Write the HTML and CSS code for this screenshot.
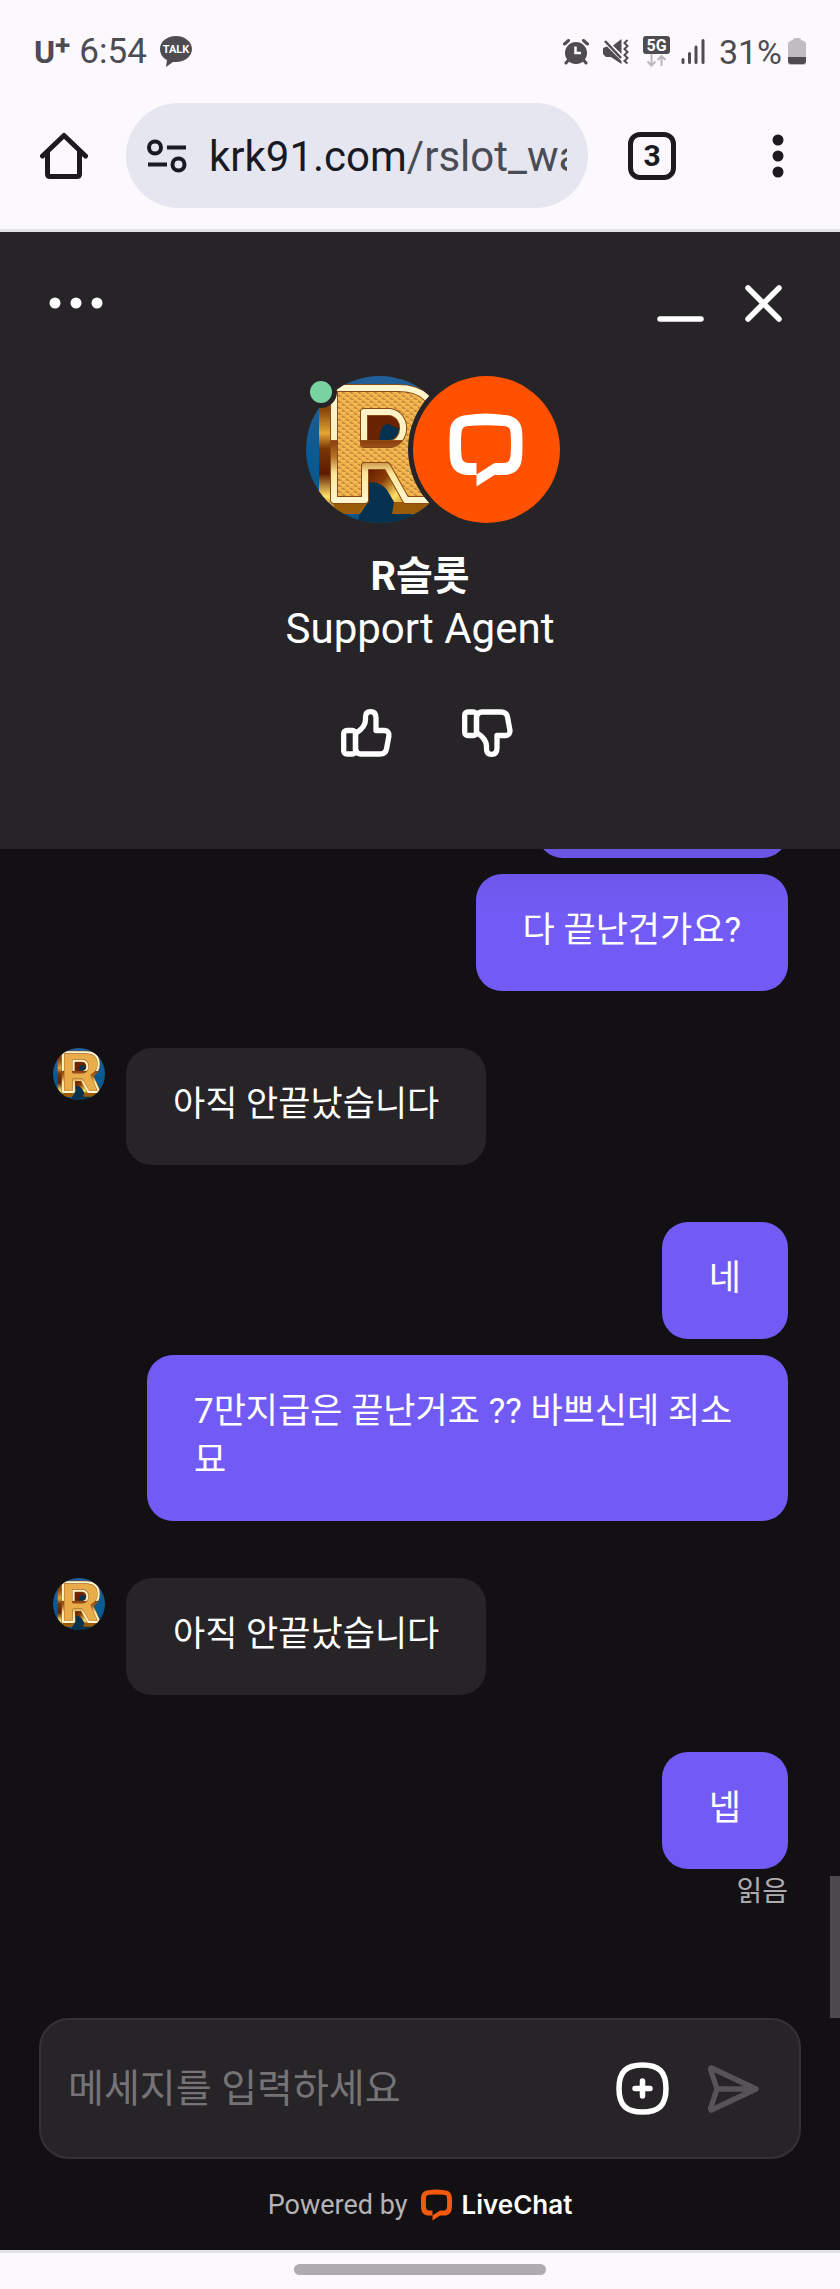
FILE: index.html
```html
<!DOCTYPE html>
<html lang="ko">
<head>
<meta charset="utf-8">
<meta name="viewport" content="width=device-width, initial-scale=1">
<title>LiveChat</title>
<link rel="stylesheet" href="styles.css">
</head>
<body>
<svg class="defs" width="0" height="0" aria-hidden="true">
  <defs>
    <linearGradient id="sky" x1="0" y1="0" x2="0" y2="1">
      <stop offset="0" stop-color="#235e98"/><stop offset=".6" stop-color="#075a94"/><stop offset="1" stop-color="#0c5680"/>
    </linearGradient>
    <linearGradient id="side" x1="0" y1="0" x2="0" y2="1">
      <stop offset="0" stop-color="#6b2a05"/><stop offset=".18" stop-color="#8a4a0c"/><stop offset=".36" stop-color="#e3a437"/>
      <stop offset=".48" stop-color="#7a3604"/><stop offset=".68" stop-color="#5d1c02"/><stop offset=".86" stop-color="#ffe06a"/><stop offset="1" stop-color="#985a06"/>
    </linearGradient>
    <linearGradient id="edge" x1="0" y1="0" x2="0" y2="1">
      <stop offset="0" stop-color="#fff6d0"/><stop offset=".46" stop-color="#fff0bd"/><stop offset=".47" stop-color="#8a3d0b"/>
      <stop offset=".62" stop-color="#b8752a"/><stop offset=".76" stop-color="#ffe79a"/><stop offset="1" stop-color="#fff6cf"/>
    </linearGradient>
    <linearGradient id="legside" x1="0" y1="0" x2="1" y2="1">
      <stop offset="0" stop-color="#5c1600"/><stop offset=".35" stop-color="#8a3d05"/><stop offset=".65" stop-color="#ffdf66"/><stop offset="1" stop-color="#a9650a"/>
    </linearGradient>
    <pattern id="mesh" width="8" height="6" patternUnits="userSpaceOnUse">
      <rect width="8" height="6" fill="#eeaf48"/>
      <path d="M0 1l3 2M4 4l3 2" stroke="#bd8340" stroke-width="1.500"/>
      <path d="M4 1h3M0 4h3" stroke="#ffcb62" stroke-width="1"/>
    </pattern>
    <clipPath id="disc"><circle cx="73.500" cy="73.500" r="73.500"/></clipPath>
    <symbol id="r-badge" viewBox="0 0 147 147">
      <g clip-path="url(#disc)">
        <rect width="147" height="147" fill="url(#sky)"/>
        <path d="M60 36h34v32H60zM60 86h26l22 61H52z" fill="#07324f"/>
        <path d="M26 12L13 30v96l19 12h22l9-14V60z" fill="url(#side)"/>
        <path d="M60 36h16q18 2 20 18l-14-6q-8 0-9 18H60z" fill="#6a2300"/>
        <path d="M60 90h24l20 36-10 10-13-22q-8-10-21-7z" fill="url(#legside)"/>
        <path d="M26 126h36l-10 12H32zM88 126h44l-10 12H86z" fill="#9a5b06"/>
        <path fill-rule="evenodd" d="M28 12H92C117 12 129 25 129 45C129 62 121 72 110 77L131 124H100L81 90H59V124H28ZM58 36V68H84C101 66 102 39 84 36Z" fill="url(#mesh)" stroke="#8a4a14" stroke-width="8" stroke-linejoin="round"/>
        <path fill-rule="evenodd" d="M28 12H92C117 12 129 25 129 45C129 62 121 72 110 77L131 124H100L81 90H59V124H28ZM58 36V68H84C101 66 102 39 84 36Z" fill="none" stroke="url(#edge)" stroke-width="6" stroke-linejoin="round"/>
      </g>
    </symbol>
    <symbol id="livechat" viewBox="0 0 73 74">
      <path fill="currentColor" fill-rule="evenodd" d="M18 2Q36.500 -1 55 2C66 2.500 72 9 72.600 18Q73.400 31 72.600 44C72 55 66 61.500 55 62H45L27 73.500V62H18C7 61.500 1 55 .4 44Q-.4 31 .4 18C1 9 7 2.500 18 2ZM27 50V61.500L45 50H54Q60.500 50 61 43Q62 31 61 19Q60.500 13 54 13Q36.500 11.500 19 13Q12.500 13 12 19Q11 31 12 43Q12.500 50 19 50Z"/>
    </symbol>
    <symbol id="thumb" viewBox="0 0 51 48">
      <g fill="none" stroke="currentColor" stroke-width="5.300" stroke-linejoin="round">
        <rect x="2.700" y="21.500" width="11.800" height="23.500" rx="3"/>
        <path d="M14.500 24.500C20 21 24.500 17 24.500 11V8Q24.500 2.700 29.500 2.700Q35 2.700 35 9V21.500H43.500Q48.500 22 47.900 27L45.500 40Q44.500 45 39 45H20Q15.500 45 14.500 40Z"/>
      </g>
    </symbol>
  </defs>
</svg>

<div class="phone">
  <div class="status">
    <div class="status-side">
      <span class="carrier">U<sup>+</sup></span>
      <span class="clock">6:54</span>
      <svg class="talk" width="32" height="31" viewBox="0 0 32 31" role="img" aria-label="TALK">
        <path fill="#4e4c50" d="M16 0C7 0 0 5.500 0 13c0 5 3 9 7 11L6 31l7-5h3c9 0 16-6 16-13S25 0 16 0Z"/>
        <text x="16" y="17" text-anchor="middle" class="talk-text">TALK</text>
      </svg>
    </div>
    <div class="status-side">
      <svg class="alarm" width="26" height="26" viewBox="0 0 26 26" aria-hidden="true">
        <circle cx="13" cy="14" r="11" fill="#4e4c50"/>
        <path d="M1.500 5L5.500 1.500M20.500 1.500L24.500 5M5.500 21L3 24M20.500 21L23 24" stroke="#4e4c50" stroke-width="3" stroke-linecap="round"/>
        <path d="M12.500 7.500V14H18" fill="none" stroke="#fff" stroke-width="2.500"/>
      </svg>
      <svg class="mute" width="26" height="26" viewBox="0 0 26 26" aria-hidden="true">
        <path fill="#4e4c50" d="M0 9l4-1.500L18.500 22v3L8 18H3l-3-3ZM10 6.500L18.500 0v15Z"/>
        <path d="M2 2L18 19" stroke="#4e4c50" stroke-width="2.500"/>
        <path d="M24.500 1l-3 3 3 3-3 3 3 3-3 3 3 3-3 3 3 2.500" fill="none" stroke="#4e4c50" stroke-width="2"/>
      </svg>
      <svg class="fiveg" width="27" height="31" viewBox="0 0 27 31" role="img" aria-label="5G">
        <rect width="27" height="18" rx="3" fill="#4e4c50"/>
        <text x="13.500" y="15" text-anchor="middle" class="fiveg-text">5G</text>
        <path d="M8.500 18V30M4.500 25.500l4 4 4-4M18.500 30V20M14.500 24l4-4 4 4" fill="none" stroke="#bbb9bd" stroke-width="2"/>
      </svg>
      <svg class="signal" width="24" height="25" viewBox="0 0 24 25" aria-hidden="true">
        <path d="M2 20.500V23.500M8.500 14.500V23.500M15 8V23.500M22 1.500V23.500" stroke="#4e4c50" stroke-width="3" stroke-linecap="round"/>
      </svg>
      <span class="percent">31%</span>
      <svg width="18" height="27" viewBox="0 0 18 27" aria-hidden="true">
        <path fill="#bfbdc1" d="M5 2q0-2 2-2h4q2 0 2 2 5 1 5 4v18q0 3-3 3H3q-3 0-3-3V6Q0 3 5 2Z"/>
        <path fill="#4e4c50" d="M0 19h18v4q0 3-3 3H3q-3 0-3-3Z"/>
      </svg>
    </div>
  </div>

  <nav class="toolbar" aria-label="브라우저">
    <button class="icon-button" aria-label="홈">
      <svg width="48" height="48" viewBox="0 0 48 48"><path d="M2.500 24L24 3.500L45.500 24M7.500 20V42Q7.500 44.500 10 44.500H37Q39.500 44.500 39.500 42V20" fill="none" stroke="#1c1a20" stroke-width="5" stroke-linecap="round" stroke-linejoin="round"/></svg>
    </button>
    <button class="address">
      <svg width="40" height="34" viewBox="0 0 40 34" aria-hidden="true"><g fill="none" stroke="#181a24" stroke-width="4"><circle cx="8" cy="8.500" r="6"/><circle cx="31.500" cy="25.500" r="6"/><path d="M20 8.500H39M1 25.500H20"/></g></svg>
      <span class="url">krk91.com<span class="url-path">/rslot_wa</span></span>
    </button>
    <button class="tabs" aria-label="탭 3개">3</button>
    <button class="icon-button kebab" aria-label="메뉴">
      <svg width="12" height="44" viewBox="0 0 12 44" fill="#1c1a20"><circle cx="6" cy="6" r="5.500"/><circle cx="6" cy="22" r="5.500"/><circle cx="6" cy="38" r="5.500"/></svg>
    </button>
  </nav>

  <header class="head">
    <div class="head-bar">
      <button class="icon-button" aria-label="옵션">
        <svg width="54" height="12" viewBox="0 0 54 12" fill="#fff"><circle cx="6" cy="6" r="5.500"/><circle cx="27" cy="6" r="5.500"/><circle cx="48" cy="6" r="5.500"/></svg>
      </button>
      <div class="head-actions">
        <button class="icon-button" aria-label="최소화">
          <svg width="47" height="37" viewBox="0 0 47 37"><path d="M3 34H44" stroke="#fff" stroke-width="5.500" stroke-linecap="round"/></svg>
        </button>
        <button class="icon-button" aria-label="닫기">
          <svg width="37" height="37" viewBox="0 0 37 37"><path d="M3 3L34 34M34 3L3 34" stroke="#fff" stroke-width="5.500" stroke-linecap="round"/></svg>
        </button>
      </div>
    </div>
    <div class="avatars">
      <div class="agent">
        <svg class="agent-photo" viewBox="0 0 147 147" role="img" aria-label="R슬롯"><use href="#r-badge"/></svg>
        <span class="online"></span>
      </div>
      <div class="brand"><svg width="74" height="74" aria-hidden="true"><use href="#livechat"/></svg></div>
    </div>
    <h1 class="name">R슬롯</h1>
    <p class="role">Support Agent</p>
    <div class="rating">
      <button class="icon-button" aria-label="좋아요"><svg width="51" height="48"><use href="#thumb"/></svg></button>
      <button class="icon-button" aria-label="싫어요"><svg class="flip" width="51" height="48"><use href="#thumb"/></svg></button>
    </div>
  </header>

  <main class="chat">
    <div class="group mine">
      <div class="bubble earlier"></div>
      <div class="bubble">다 끝난건가요?</div>
    </div>
    <div class="group theirs">
      <svg class="mini-photo" viewBox="0 0 147 147" aria-hidden="true"><use href="#r-badge"/></svg>
      <div class="bubble">아직 안끝났습니다</div>
    </div>
    <div class="group mine">
      <div class="bubble">네</div>
      <div class="bubble">7만지급은 끝난거죠 ?? 바쁘신데 죄소묘</div>
    </div>
    <div class="group theirs">
      <svg class="mini-photo" viewBox="0 0 147 147" aria-hidden="true"><use href="#r-badge"/></svg>
      <div class="bubble">아직 안끝났습니다</div>
    </div>
    <div class="group mine">
      <div class="bubble">넵</div>
    </div>
    <div class="receipt">읽음</div>
    <span class="scroll-thumb"></span>
  </main>

  <form class="composer">
    <input class="message" type="text" placeholder="메세지를 입력하세요" aria-label="메세지를 입력하세요">
    <button class="icon-button" type="button" aria-label="첨부">
      <svg width="53" height="53" viewBox="0 0 53 53"><path d="M26.500 3C43 3 50 10 50 26.500S43 50 26.500 50 3 43 3 26.500 10 3 26.500 3Z" fill="none" stroke="#fff" stroke-width="5.500"/><path d="M26.500 19V34M19 26.500H34" stroke="#fff" stroke-width="5.500" stroke-linecap="round"/></svg>
    </button>
    <button class="icon-button" type="submit" aria-label="보내기">
      <svg width="51" height="48" viewBox="0 0 51 48"><path d="M3.500 3L48 24L3.500 45Q2 45 3 42L9 24L3 6Q2 3 3.500 3ZM9 24H47" fill="none" stroke="#565457" stroke-width="5.300" stroke-linejoin="round"/></svg>
    </button>
  </form>
  <footer class="powered">
    <span>Powered by</span>
    <a class="livechat-link" href="#"><svg width="31" height="32" aria-hidden="true"><use href="#livechat"/></svg>LiveChat</a>
  </footer>
  <div class="gesture"><span class="gesture-bar"></span></div>
</div>
</body>
</html>
```
FILE: styles.css
```css
* { box-sizing: border-box; }

body {
  margin: 0;
  font-family: Roboto, "Noto Sans CJK KR", sans-serif;
  background: #121013;
  color: #fff;
}

button {
  padding: 0;
  border: 0;
  background: none;
  color: inherit;
  font: inherit;
}

svg { display: block; flex: none; }
.defs { position: absolute; }

.phone {
  display: flex;
  flex-direction: column;
  min-height: 100vh;
}

/* status bar */
.status {
  display: flex;
  justify-content: space-between;
  align-items: center;
  height: 103px;
  padding: 0 34px;
  background: #fbf9fd;
  color: #4e4c50;
  font-size: 34px;
}
.status-side { display: flex; align-items: center; }
.carrier { font-size: 32px; font-weight: 700; line-height: 40px; }
.carrier sup { font-size: 28px; line-height: 0; vertical-align: 8px; }
.clock { margin: 0 13px 0 9px; font-size: 35px; }
.talk-text { fill: #fff; font-size: 11px; font-weight: 700; }
.fiveg-text { fill: #fff; font-size: 16px; font-weight: 700; }
.alarm, .mute { margin-right: 14px; }
.fiveg { margin-right: 11px; }
.signal { margin-right: 14px; }
.percent { margin-right: 6px; }

/* browser toolbar */
.toolbar {
  display: flex;
  align-items: center;
  padding: 0 56px 21px 40px;
  border-bottom: 3px solid #e2e1e8;
  background: #fbf9fd;
}
.icon-button { display: block; flex: none; }
.address {
  display: flex;
  flex: 1;
  align-items: center;
  gap: 22px;
  min-width: 0;
  height: 105px;
  margin: 0 40px 0 38px;
  padding: 0 21px;
  border-radius: 53px;
  background: #e5e6f0;
}
.url {
  flex: 1;
  min-width: 0;
  padding-top: 2px;
  overflow: hidden;
  color: #181a24;
  font-size: 42px;
  line-height: 56px;
  text-align: left;
  white-space: nowrap;
}
.url-path { color: #494b55; }
.tabs {
  width: 48px;
  height: 48px;
  border: 5px solid #1c1a20;
  border-radius: 12px;
  color: #1c1a20;
  font-size: 30px;
  font-weight: 700;
  line-height: 36px;
}
.kebab { margin-left: 96px; }

/* chat header */
.head {
  padding: 47px 58px 92px 49px;
  background: #262427;
}
.head-bar {
  display: flex;
  justify-content: space-between;
  align-items: center;
  height: 48px;
}
.head-actions { display: flex; gap: 41px; }
.avatars {
  display: flex;
  justify-content: center;
  margin-top: 49px;
  padding-left: 34px;
}
.agent { position: relative; }
.agent-photo { width: 147px; height: 147px; }
.online {
  position: absolute;
  top: 0;
  left: -1px;
  width: 32px;
  height: 32px;
  border: 5px solid #262427;
  border-radius: 50%;
  background: #79d3a0;
}
.brand {
  z-index: 1;
  display: grid;
  place-items: center;
  width: 147px;
  height: 147px;
  margin-left: -40px;
  border-radius: 50%;
  background: #ff5100;
  box-shadow: 0 0 0 5px #262427;
}
.name, .role {
  margin: 0;
  padding-left: 9px;
  font-size: 42px;
  line-height: 52px;
  text-align: center;
}
.name { margin-top: 28px; font-size: 40px; font-weight: 700; }
.role { font-weight: 400; }
.rating {
  display: flex;
  justify-content: center;
  gap: 70px;
  margin-top: 54px;
  padding-left: 22px;
}
.flip { transform: scaleY(-1); }

/* conversation */
.chat {
  position: relative;
  display: flex;
  flex: 1 0 0;
  flex-direction: column;
  justify-content: flex-end;
  gap: 57px;
  min-height: 0;
  padding: 0 52px 106px 53px;
  overflow: hidden;
}
.chat::before {
  content: "";
  position: absolute;
  inset: 0 0 auto;
  height: 64px;
  background: linear-gradient(rgba(18, 16, 19, 0.08), rgba(18, 16, 19, 0));
}
.group { display: flex; flex: none; }
.mine { flex-direction: column; align-items: flex-end; gap: 16px; }
.theirs { align-items: flex-start; gap: 21px; }
.bubble {
  max-width: 641px;
  padding: 32px 47px 36px;
  border-radius: 26px;
  background: #262427;
  font-size: 35px;
  line-height: 49px;
}
.mine .bubble { background: #725bf4; }
.earlier { width: 251px; height: 117px; }
.mini-photo { width: 52px; height: 52px; }
.receipt {
  flex: none;
  height: 40px;
  margin-top: -54px;
  color: #aeacaf;
  font-size: 28px;
  line-height: 40px;
  text-align: right;
}
.scroll-thumb {
  position: absolute;
  right: 0;
  bottom: 0;
  width: 10px;
  height: 142px;
  background: #4c4a4d;
}

/* composer */
.composer {
  display: flex;
  align-items: center;
  gap: 39px;
  height: 141px;
  margin: 0 39px;
  padding: 0 40px 0 27px;
  border: 2px solid #343235;
  border-radius: 30px;
  background: #262427;
}
.message {
  flex: 1;
  min-width: 0;
  height: 64px;
  padding: 0;
  border: 0;
  outline: 0;
  background: none;
  color: #fff;
  font: inherit;
  font-size: 39px;
}
.message::placeholder { color: #757376; opacity: 1; }

.powered {
  display: flex;
  justify-content: center;
  align-items: center;
  gap: 14px;
  height: 91px;
  color: #b5b3b6;
  font-size: 27px;
}
.livechat-link {
  display: flex;
  align-items: center;
  gap: 9px;
  color: #fff;
  font-family: Inter, sans-serif;
  font-size: 26px;
  font-weight: 600;
  text-decoration: none;
}
.livechat-link svg { color: #f4590f; }

.gesture {
  display: flex;
  justify-content: center;
  height: 39px;
  padding-top: 11px;
  border-top: 3px solid #e2e1e4;
  background: #fbf9fd;
}
.gesture-bar {
  width: 30%;
  height: 11px;
  border-radius: 6px;
  background: #adabae;
}
```
